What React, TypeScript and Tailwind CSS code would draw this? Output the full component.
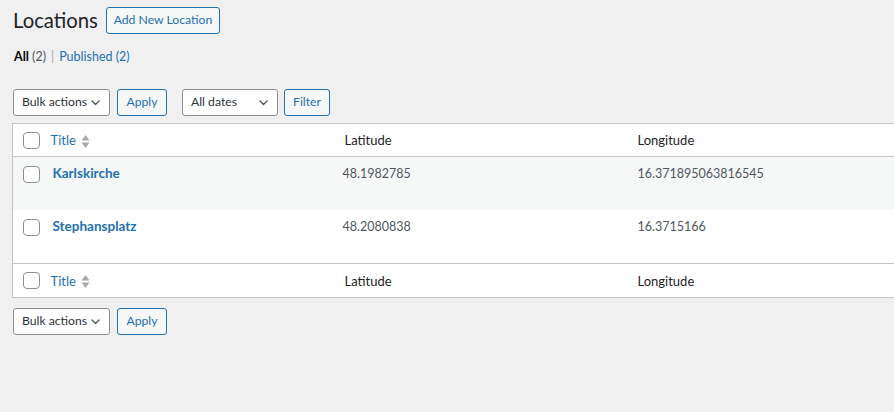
import React from 'react';

type Location = {
  title: string;
  latitude: string;
  longitude: string;
};

const locations: Location[] = [
  { title: 'Karlskirche', latitude: '48.1982785', longitude: '16.371895063816545' },
  { title: 'Stephansplatz', latitude: '48.2080838', longitude: '16.3715166' },
];

const Checkbox = () => (
  <span className="block w-[17px] h-[17px] rounded-[4px] border border-[#8c8f94] bg-white" />
);

const Chevron = () => (
  <svg width="9" height="6" viewBox="0 0 9 6" fill="none">
    <path d="M1 1l3.5 3.5L8 1" stroke="#50575e" strokeWidth="1.4" strokeLinecap="round" strokeLinejoin="round" />
  </svg>
);

const SortIcon = () => (
  <svg width="9" height="15" viewBox="0 0 9 15" className="ml-[5px]">
    <path d="M4.5 1L8.5 6.5H0.5Z" fill="#a7aaad" />
    <path d="M4.5 14L8.5 8.5H0.5Z" fill="#a7aaad" />
  </svg>
);

const Select = ({ label, width }: { label: string; width: string }) => (
  <div
    className={`${width} h-[27px] flex items-center justify-between pl-[8px] pr-[9px] bg-white border border-[#8c8f94] rounded-[3px] text-[12.2px] text-[#2c3338]`}
  >
    <span>{label}</span>
    <Chevron />
  </div>
);

const Button = ({ label, width }: { label: string; width: string }) => (
  <button
    className={`${width} h-[27px] flex items-center justify-center bg-[#f6f7f7] border border-[#2271b1] rounded-[3px] text-[12.2px] text-[#2271b1]`}
  >
    {label}
  </button>
);

const HeaderRow = ({ height }: { height: string }) => (
  <tr className={height}>
    <td className="pl-[10px] align-middle">
      <Checkbox />
    </td>
    <th className="pl-[10px] pt-[2px] text-left font-normal align-middle">
      <span className="flex items-center text-[13px] text-[#2271b1]">
        Title
        <SortIcon />
      </span>
    </th>
    <th className="pl-[10px] pt-[2px] text-left font-normal text-[13px] text-[#1d2327] align-middle">Latitude</th>
    <th className="pl-[10px] pt-[2px] text-left font-normal text-[13px] text-[#1d2327] align-middle">Longitude</th>
  </tr>
);

export default function App() {
  return (
    <div className="min-h-screen w-full overflow-hidden bg-[#f0f0f1] font-['Lato',sans-serif] text-[#3c434a]">
      <div className="pl-[12px] pt-[7px]">
        <div className="flex items-center h-[27px] pl-[1px]">
          <h1 className="text-[20.3px] leading-none text-[#1d2327]">Locations</h1>
          <Button label="Add New Location" width="w-[114px] ml-[8px]" />
        </div>

        <ul className="flex items-center h-[18px] mt-[14px] pl-[2px] text-[12.5px]">
          <li>
            <span className="font-bold text-black">All</span>{' '}
            <span className="text-[#50575e]">(2)</span>
            <span className="mx-[5px] text-[#a7aaad]">|</span>
          </li>
          <li>
            <span className="text-[#2271b1]">Published (2)</span>
          </li>
        </ul>

        <div className="flex mt-[23px] pl-[1px]">
          <Select label="Bulk actions" width="w-[97px]" />
          <Button label="Apply" width="w-[50px] ml-[7px]" />
          <Select label="All dates" width="w-[96px] ml-[15px]" />
          <Button label="Filter" width="w-[46px] ml-[6px]" />
        </div>

        <table className="mt-[7px] w-[912px] table-fixed border-collapse border border-[#c3c4c7] bg-white">
          <colgroup>
            <col className="w-[28px]" />
            <col className="w-[294px]" />
            <col className="w-[293px]" />
            <col />
          </colgroup>
          <thead className="border-b border-[#c3c4c7]">
            <HeaderRow height="h-[33px]" />
          </thead>
          <tbody>
            {locations.map((loc, i) => (
              <tr key={loc.title} className={`${i === 0 ? 'h-[53px] bg-[#f6f7f7]' : 'h-[54px] bg-white'}`}>
                <td className="pl-[10px] pt-[9px] align-top">
                  <Checkbox />
                </td>
                <td className="pl-[12px] pt-[7px] align-top">
                  <strong className="block leading-[18px] text-[13.5px] font-bold text-[#2271b1]">{loc.title}</strong>
                </td>
                <td className="pl-[8px] pt-[8px] align-top">
                  <span className="block leading-[18px] text-[12.5px] text-[#50575e]">{loc.latitude}</span>
                </td>
                <td className="pl-[10px] pt-[8px] align-top">
                  <span className="block leading-[18px] text-[12.5px] text-[#50575e]">{loc.longitude}</span>
                </td>
              </tr>
            ))}
          </tbody>
          <tfoot className="border-t border-[#c3c4c7]">
            <HeaderRow height="h-[34px]" />
          </tfoot>
        </table>

        <div className="flex mt-[10px] pl-[1px]">
          <Select label="Bulk actions" width="w-[97px]" />
          <Button label="Apply" width="w-[50px] ml-[7px]" />
        </div>
      </div>
    </div>
  );
}
